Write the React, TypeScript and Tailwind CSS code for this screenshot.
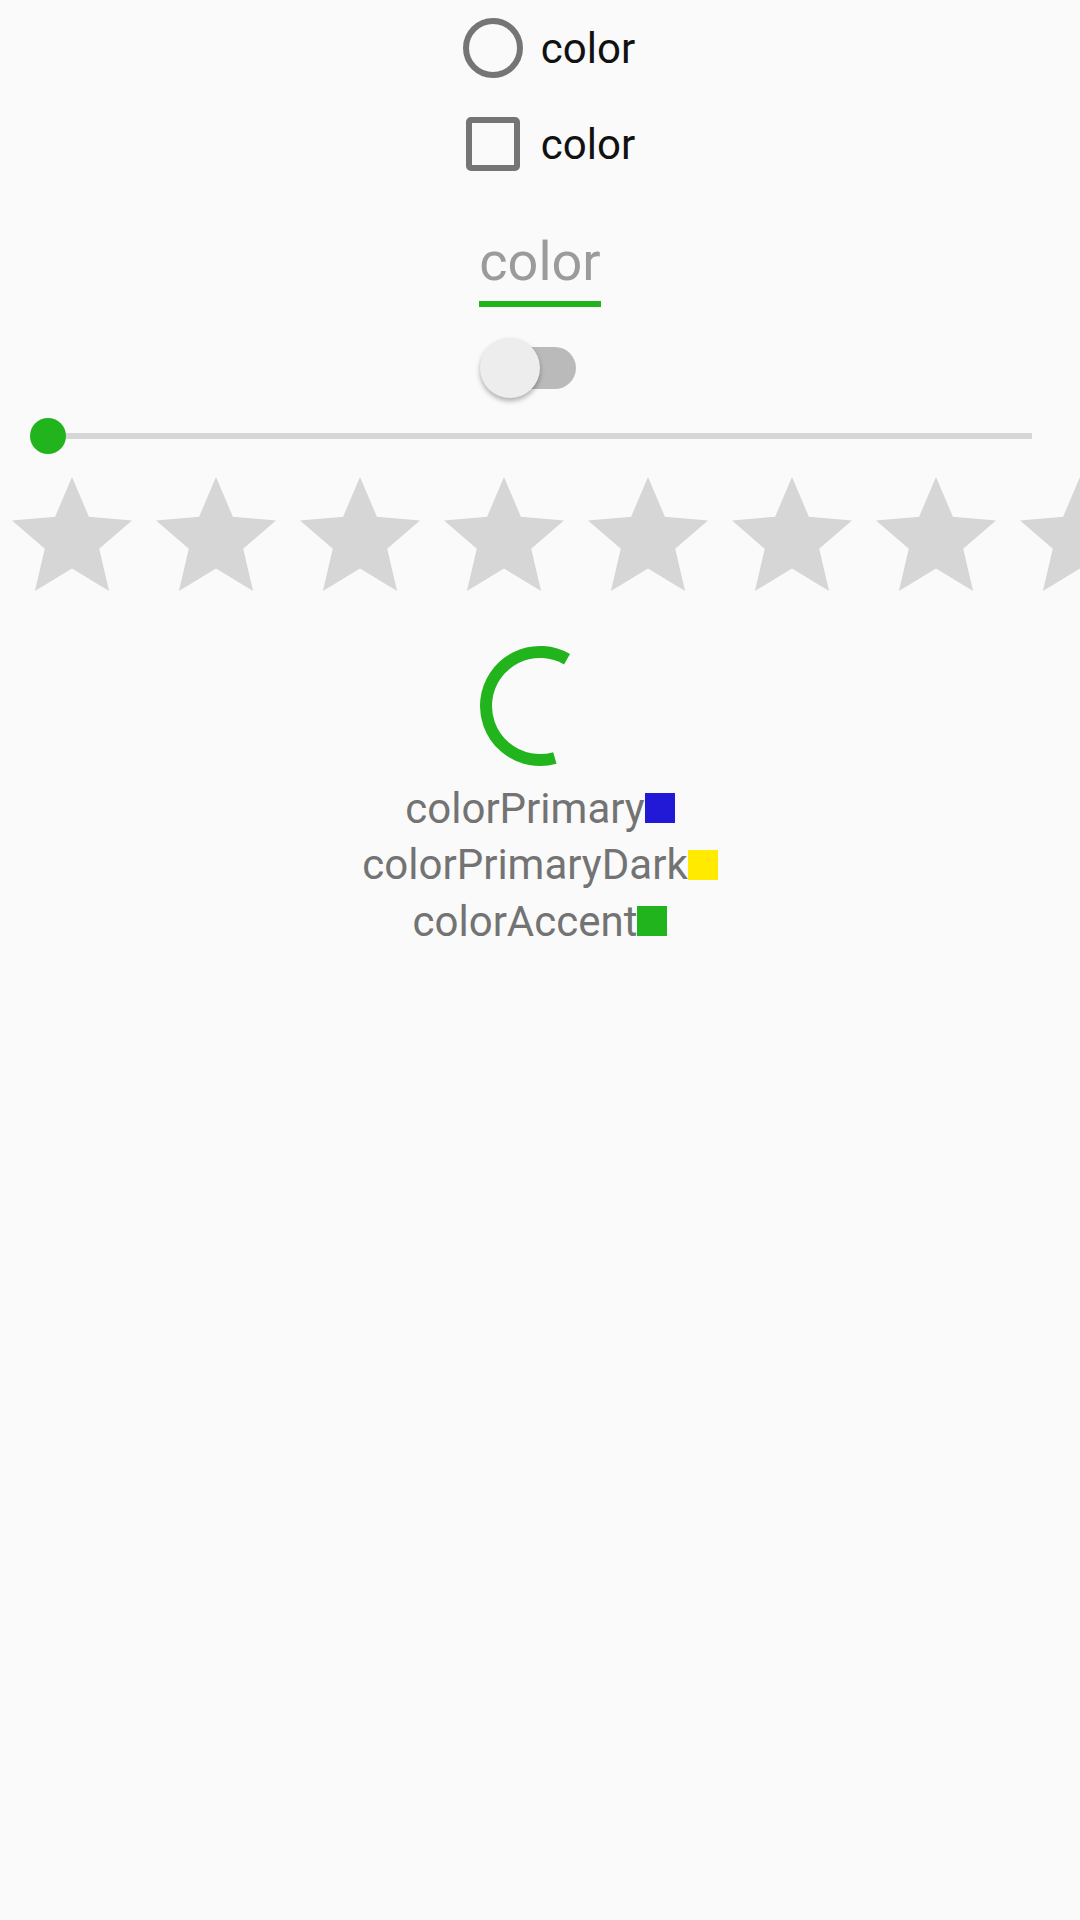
import React from "react";

const GREEN = "#21b41c";

function Star() {
  return (
    <svg width="144" height="144" viewBox="0 0 24 24" className="shrink-0">
      <path
        d="M12 17.27L18.18 21l-1.64-7.03L22 9.24l-7.19-.62L12 2 9.19 8.62 2 9.24l5.46 4.73L5.82 21z"
        fill="#d6d6d6"
      />
    </svg>
  );
}

function ColorRow({ label, color }: { label: string; color: string }) {
  return (
    <div className="flex h-[56.5px] items-center justify-center">
      <span className="text-[42px] leading-[49px] text-[#737373]">{label}</span>
      <span className="h-[30px] w-[30px]" style={{ backgroundColor: color }} />
    </div>
  );
}

export default function App() {
  return (
    <div
      className="min-h-[1920px] w-[1080px] overflow-hidden bg-[#fafafa]"
      style={{ fontFamily: "Roboto, 'Noto Sans', sans-serif" }}
    >
      {/* Radio */}
      <div className="flex h-[96px] items-center justify-center">
        <div className="flex h-[96px] w-[96px] items-center justify-center">
          <div className="h-[60px] w-[60px] rounded-full border-[6.5px] border-[#757575]" />
        </div>
        <span className="text-[42px] leading-[49px] text-[#111]">color</span>
      </div>
      {/* Checkbox */}
      <div className="flex h-[96px] items-center justify-center">
        <div className="flex h-[96px] w-[96px] items-center justify-center">
          <div className="h-[54px] w-[54px] rounded-[5px] border-[6px] border-[#757575]" />
        </div>
        <span className="text-[42px] leading-[49px] text-[#111]">color</span>
      </div>
      {/* EditText */}
      <div className="mt-[38px] flex justify-center">
        <div className="flex flex-col">
          <span className="text-[54px] leading-[63px] text-[#9b9b9b]">color</span>
          <div className="mt-[8px] h-[6px]" style={{ backgroundColor: GREEN }} />
        </div>
      </div>
      {/* Switch */}
      <div className="mt-[31px] flex h-[60px] items-center justify-center">
        <div className="relative mr-[18px] h-[42px] w-[90px] rounded-full bg-[#bababa]">
          <div className="absolute left-[-6px] top-[-9px] h-[60px] w-[60px] rounded-full bg-[#ededed] shadow-[0_3px_5px_rgba(0,0,0,0.3)]" />
        </div>
      </div>
      {/* Slider */}
      <div className="mt-[20px] flex h-[36px] items-center px-[48px]">
        <div className="relative h-[6px] flex-1 bg-[#d6d6d6]">
          <div
            className="absolute left-[-18px] top-[-15px] h-[36px] w-[36px] rounded-full"
            style={{ backgroundColor: GREEN }}
          />
        </div>
      </div>
      {/* Rating */}
      <div className="mt-[11px] flex overflow-hidden">
        {Array.from({ length: 8 }).map((_, i) => (
          <Star key={i} />
        ))}
      </div>
      {/* Spinner */}
      <div className="mt-[25px] flex justify-center">
        <svg width="144" height="144" viewBox="0 0 144 144">
          <path
            d="M99 25.23 A54 54 0 1 0 86.88 123.91"
            fill="none"
            stroke={GREEN}
            strokeWidth="12"
          />
        </svg>
      </div>
      {/* Colors */}
      <div className="pt-[2px]">
        <ColorRow label="colorPrimary" color="#2219d6" />
        <ColorRow label="colorPrimaryDark" color="#ffea00" />
        <ColorRow label="colorAccent" color={GREEN} />
      </div>
    </div>
  );
}
